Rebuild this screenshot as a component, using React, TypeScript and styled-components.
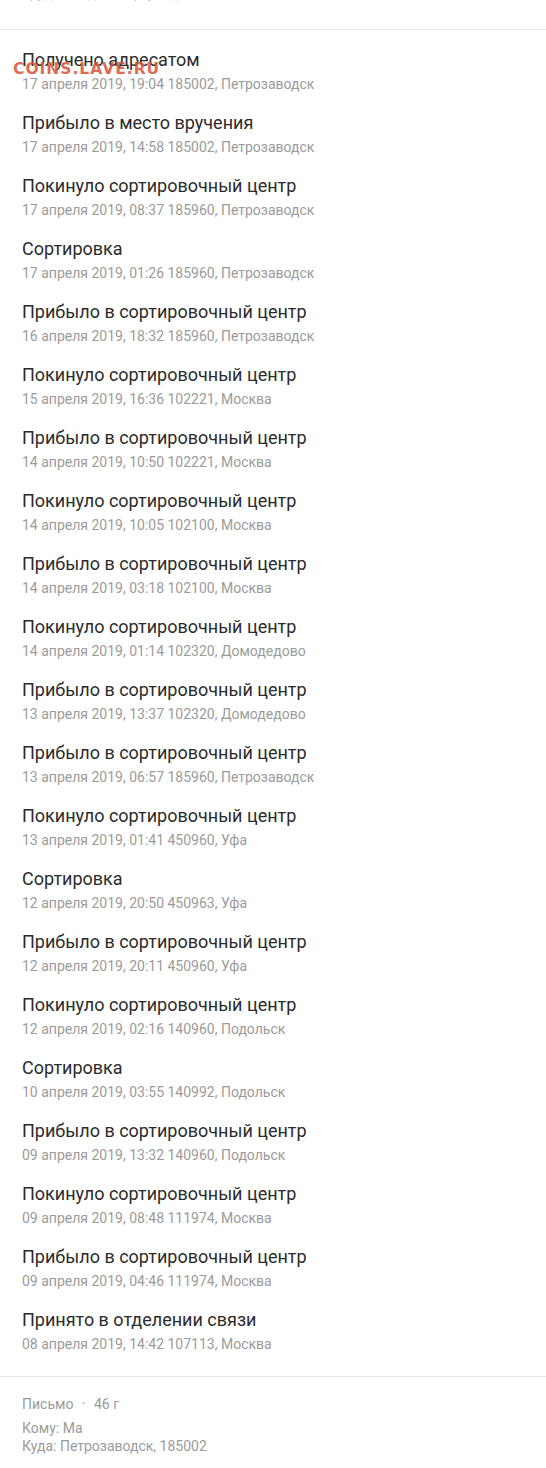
import React from 'react'
import styled, { createGlobalStyle } from 'styled-components'

const GlobalStyle = createGlobalStyle`
    html, body {
        margin: 0;
        padding: 0;
        background: #ffffff;
    }
    body {
        font-family: Roboto, "Noto Sans", Arial, sans-serif;
        -webkit-font-smoothing: antialiased;
    }
`

interface ITrackEvent {
    status: string
    date: string
    place: string
}

const events: ITrackEvent[] = [
    { status: 'Получено адресатом', date: '17 апреля 2019, 19:04', place: '185002, Петрозаводск' },
    { status: 'Прибыло в место вручения', date: '17 апреля 2019, 14:58', place: '185002, Петрозаводск' },
    { status: 'Покинуло сортировочный центр', date: '17 апреля 2019, 08:37', place: '185960, Петрозаводск' },
    { status: 'Сортировка', date: '17 апреля 2019, 01:26', place: '185960, Петрозаводск' },
    { status: 'Прибыло в сортировочный центр', date: '16 апреля 2019, 18:32', place: '185960, Петрозаводск' },
    { status: 'Покинуло сортировочный центр', date: '15 апреля 2019, 16:36', place: '102221, Москва' },
    { status: 'Прибыло в сортировочный центр', date: '14 апреля 2019, 10:50', place: '102221, Москва' },
    { status: 'Покинуло сортировочный центр', date: '14 апреля 2019, 10:05', place: '102100, Москва' },
    { status: 'Прибыло в сортировочный центр', date: '14 апреля 2019, 03:18', place: '102100, Москва' },
    { status: 'Покинуло сортировочный центр', date: '14 апреля 2019, 01:14', place: '102320, Домодедово' },
    { status: 'Прибыло в сортировочный центр', date: '13 апреля 2019, 13:37', place: '102320, Домодедово' },
    { status: 'Прибыло в сортировочный центр', date: '13 апреля 2019, 06:57', place: '185960, Петрозаводск' },
    { status: 'Покинуло сортировочный центр', date: '13 апреля 2019, 01:41', place: '450960, Уфа' },
    { status: 'Сортировка', date: '12 апреля 2019, 20:50', place: '450963, Уфа' },
    { status: 'Прибыло в сортировочный центр', date: '12 апреля 2019, 20:11', place: '450960, Уфа' },
    { status: 'Покинуло сортировочный центр', date: '12 апреля 2019, 02:16', place: '140960, Подольск' },
    { status: 'Сортировка', date: '10 апреля 2019, 03:55', place: '140992, Подольск' },
    { status: 'Прибыло в сортировочный центр', date: '09 апреля 2019, 13:32', place: '140960, Подольск' },
    { status: 'Покинуло сортировочный центр', date: '09 апреля 2019, 08:48', place: '111974, Москва' },
    { status: 'Прибыло в сортировочный центр', date: '09 апреля 2019, 04:46', place: '111974, Москва' },
    { status: 'Принято в отделении связи', date: '08 апреля 2019, 14:42', place: '107113, Москва' },
]

const App = () => {
    return (
        <Page>
            <GlobalStyle />
            <Header>
                <HeaderText>Трудовой договор, уведомление</HeaderText>
            </Header>

            <History>
                {events.map((event, i) => (
                    <EventItem key={i}>
                        <Status>{event.status}</Status>
                        <Meta>{event.date} {event.place}</Meta>
                    </EventItem>
                ))}
            </History>

            <Footer>
                <FooterLine $spaced>
                    Письмо <Dot>·</Dot> 46 г
                </FooterLine>
                <FooterLine>Кому: Ма</FooterLine>
                <FooterLine>Куда: Петрозаводск, 185002</FooterLine>
            </Footer>

            <Watermark>COINS.LAVE.RU</Watermark>
        </Page>
    )
}

export default App

const Page = styled.div`
    position: relative;
    width: 546px;
    min-height: 1468px;
    overflow: hidden;
    background: #ffffff;
`

const Header = styled.div`
    height: 29px;
    border-bottom: 1px solid #e4e4e4;
    padding-left: 22px;
    overflow: hidden;
`

const HeaderText = styled.p`
    margin: -17px 0 0 0;
    font-size: 14px;
    line-height: 20px;
    color: #c4c4c4;
`

const History = styled.div`
    display: flex;
    flex-direction: column;
    gap: 17px;
    padding: 18px 22px 22px 22px;
    border-bottom: 1px solid #e4e4e4;
`

const EventItem = styled.div`
    display: flex;
    flex-direction: column;
    gap: 2px;
`

const Status = styled.p`
    margin: 0;
    font-size: 18px;
    line-height: 24px;
    color: #2b2b2b;
`

const Meta = styled.p`
    margin: 0;
    font-size: 14px;
    line-height: 20px;
    color: #9b9b9b;
`

const Footer = styled.div`
    padding: 17px 22px 12px 22px;
`

const FooterLine = styled.p<{ $spaced?: boolean }>`
    margin: 0 0 ${({ $spaced }) => ($spaced ? '5px' : '0')} 0;
    font-size: 14px;
    line-height: ${({ $spaced }) => ($spaced ? '20px' : '18px')};
    color: #9b9b9b;
`

const Dot = styled.span`
    display: inline-block;
    margin: 0 5px;
`

const Watermark = styled.div`
    position: absolute;
    left: 13px;
    top: 59px;
    font-family: "DejaVu Sans", Verdana, sans-serif;
    font-weight: bold;
    font-size: 15.5px;
    letter-spacing: 1px;
    line-height: 20px;
    color: rgba(214, 88, 62, 0.9);
    pointer-events: none;
`
